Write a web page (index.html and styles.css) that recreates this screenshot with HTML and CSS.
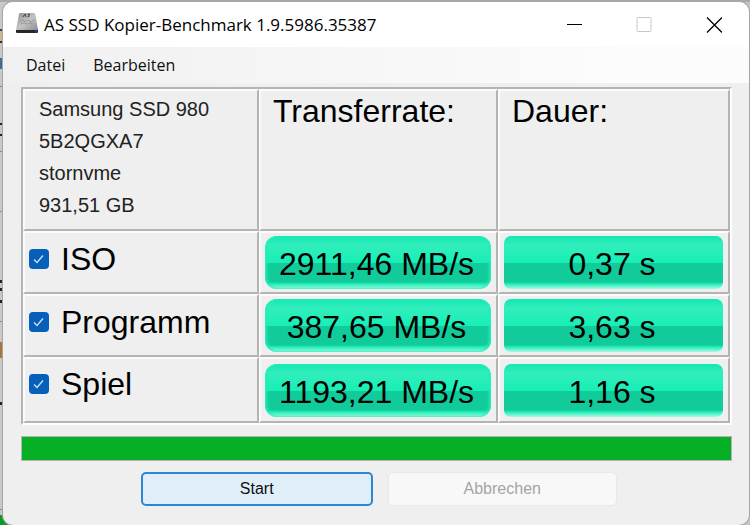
FILE: index.html
```html
<!DOCTYPE html>
<html lang="de">
<head>
    <meta charset="UTF-8">
    <meta name="viewport" content="width=device-width, initial-scale=1.0">
    <title>AS SSD Kopier-Benchmark 1.9.5986.35387</title>
    <link rel="stylesheet" href="styles.css">
</head>
<body>
    <div class="window">

        <header class="titlebar">
            <svg class="app-icon" viewBox="0 0 24 24" aria-hidden="true">
                <defs>
                    <linearGradient id="metal" x1="0" y1="0" x2="1" y2="1">
                        <stop offset="0" stop-color="#909090"/>
                        <stop offset="0.5" stop-color="#c4c4c4"/>
                        <stop offset="1" stop-color="#8c8c8c"/>
                    </linearGradient>
                </defs>
                <path d="M5 0h14q1 0 1.300 1L23 17H1L4 1q.2-1 1-1z" fill="url(#metal)"/>
                <path d="M1 17h22v2q0 1-1 1H2q-1 0-1-1z" fill="#26262e"/>
                <path d="M20 18.500h2" stroke="#2a2aff" stroke-width="2"/>
                <path d="M8 4l2-3 1 3M15 1l-2 .5 1.500 1.500-2 1" fill="none" stroke="#444"/>
                <path d="M5 9l3-2 2 2 3-2 3 2 3-2M6 11l3-1 3 1 3-1 3 1" fill="none" stroke="#999"/>
            </svg>
            <h1>AS SSD Kopier-Benchmark 1.9.5986.35387</h1>
            <div class="window-controls">
                <button type="button" aria-label="Minimieren">
                    <svg viewBox="0 0 16 16"><path d="M1 7.500h15" stroke="#000"/></svg>
                </button>
                <button type="button" aria-label="Maximieren" disabled>
                    <svg viewBox="0 0 16 16"><rect x="1" y="0.500" width="14" height="14" rx="1" fill="none" stroke="#c8c8c8"/></svg>
                </button>
                <button type="button" aria-label="Schließen">
                    <svg viewBox="0 0 16 16"><path d="M1 0.500l15 15M16 0.500L1 15.500" stroke="#000" stroke-width="1.300"/></svg>
                </button>
            </div>
        </header>

        <nav class="menu">
            <button type="button">Datei</button>
            <button type="button">Bearbeiten</button>
        </nav>

        <main class="content">
            <table class="results">
                <thead>
                    <tr>
                        <td class="drive">
                            <p>Samsung SSD 980</p>
                            <p>5B2QGXA7</p>
                            <p>stornvme</p>
                            <p>931,51 GB</p>
                        </td>
                        <th scope="col">Transferrate:</th>
                        <th scope="col">Dauer:</th>
                    </tr>
                </thead>
                <tbody>
                    <tr>
                        <td class="test"><label><input type="checkbox" checked>ISO</label></td>
                        <td><div class="bar">2911,46 MB/s</div></td>
                        <td><div class="bar clipped">0,37 s</div></td>
                    </tr>
                    <tr>
                        <td class="test"><label><input type="checkbox" checked>Programm</label></td>
                        <td><div class="bar">387,65 MB/s</div></td>
                        <td><div class="bar clipped">3,63 s</div></td>
                    </tr>
                    <tr class="last">
                        <td class="test"><label><input type="checkbox" checked>Spiel</label></td>
                        <td><div class="bar">1193,21 MB/s</div></td>
                        <td><div class="bar clipped">1,16 s</div></td>
                    </tr>
                </tbody>
            </table>

            <div class="progress" role="progressbar" aria-label="Fortschritt" aria-valuenow="100">
                <div class="progress-fill" style="width: 100%"></div>
            </div>

            <div class="actions">
                <button type="button" class="start">Start</button>
                <button type="button" disabled>Abbrechen</button>
            </div>
        </main>
    </div>
</body>
</html>
```
FILE: styles.css
```css
* {
    box-sizing: border-box;
}

/* desktop and the edges of the windows lying behind */
body {
    margin: 0;
    padding: 2px 1px 0 3px;
    min-height: 100vh;
    display: flex;
    background:
        linear-gradient(#a8a8a8, #a8a8a8) 0 0 / 100% 2px no-repeat,
        linear-gradient(
            #c8c8c8 29px, #4a4232 29px 31px, #c9b98c 31px 41px, #333 41px 43px,
            #c8c8c8 43px 58px, #3c6c9c 58px 69px, #c8c8c8 69px 86px,
            #8c9440 86px 87px, #c8c8c8 87px 123px, #222 123px 125px,
            #c8c8c8 125px 134px, #222 134px 136px, #c8c8c8 136px 151px,
            #888 151px 152px, #c8c8c8 152px 211px, #888 211px 212px,
            #c8c8c8 212px 280px, #222 280px 283px, #c8c8c8 283px 288px,
            #222 288px 291px, #c8c8c8 291px 300px, #222 300px 303px,
            #c8c8c8 303px 321px, #888 321px 322px, #c8c8c8 322px 342px,
            #a87440 342px 358px, #c8c8c8 358px 402px, #222 402px 405px,
            #c8c8c8 405px 509px, #888 509px 510px, #c8c8c8 510px 515px,
            #0b9a26 515px) 0 0 / 14px 100% no-repeat,
        #c4c4c4;
    font-family: "Liberation Sans", Arial, sans-serif;
    color: #000;
}

button {
    font-family: inherit;
    padding: 0;
}

.window {
    flex: 1;
    background: #efefef;
    border-radius: 10px;
    box-shadow: 0 0 0 1px #a6a6a6;
    overflow: hidden;
}

.titlebar {
    display: flex;
    align-items: center;
    height: 45px;
    padding-left: 12px;
    background: #fff;
}

.app-icon {
    width: 24px;
    height: 24px;
    margin-right: 5px;
}

.titlebar h1 {
    flex: 1;
    margin: 0;
    font: 17px/22px "Open Sans", "Noto Sans", sans-serif;
    white-space: nowrap;
}

.window-controls {
    display: flex;
}

.window-controls button {
    width: 70px;
    height: 45px;
    border: none;
    background: none;
}

.window-controls svg {
    width: 16px;
    height: 16px;
    vertical-align: middle;
}

.menu {
    display: flex;
    gap: 28px;
    height: 36px;
    padding: 0 23px;
    background: linear-gradient(90deg, #f0f0f0, #fcfcfc 85%);
}

.menu button {
    border: none;
    background: none;
    font: 16px "Open Sans", "Noto Sans", sans-serif;
    color: #111;
}

.content {
    padding: 4px 17px 18px 18px;
}

.results {
    width: 100%;
    table-layout: fixed;
    border-collapse: separate;
    border-spacing: 0;
    border: 2px solid;
    border-color: #b4b4b4 #fff #fff #b4b4b4;
    font-size: 32px;
}

.results td, .results th {
    padding: 0 5px 0 4px;
    border: 2px solid;
    border-color: #fbfbfb #b4b4b4 #b4b4b4 #fbfbfb;
    height: 63px;
    text-align: left;
    font-weight: normal;
}

.results thead td, .results thead th {
    height: 142px;
    vertical-align: top;
}

.results thead th {
    padding: 2px 12px;
}

.results .last td {
    height: 66px;
}

.results .drive {
    width: 236px;
    padding: 2px 14px;
    font-size: 20px;
    line-height: 32px;
    color: #222;
}

.drive p {
    margin: 0;
}

.results th:last-child {
    width: 232px;
}

.test label {
    display: flex;
    align-items: center;
    gap: 12px;
    line-height: 36px;
    padding-bottom: 8px;
}

.last .test label {
    padding-bottom: 12px;
}

.test input {
    appearance: none;
    width: 20px;
    height: 20px;
    margin: 0;
    border-radius: 4px;
    background: #0660b9 url("data:image/svg+xml,%3Csvg xmlns='http://www.w3.org/2000/svg' viewBox='0 0 20 20'%3E%3Cpath d='M5 10.500l3 3 6-7' fill='none' stroke='%23cfe2f5' stroke-width='1.300'/%3E%3C/svg%3E");
}

.bar {
    height: 53px;
    padding: 3px 3px 0 0;
    border-radius: 12px;
    background: linear-gradient(#10e8b0 0, #32eebc 9px, #16efb6 27px, #12cb9b 27px, #12cb9b 46px, #20efb8 48px, #b0f7e3 53px);
    box-shadow: inset 2px 0 3px #24efb9, inset -2px 0 3px #24efb9;
    line-height: 50px;
    text-align: center;
    white-space: nowrap;
}

.bar.clipped {
    border-radius: 7px;
    box-shadow: none;
}

.progress {
    height: 25px;
    margin-top: 11px;
    border: 1px solid #b4b4b4;
}

.progress-fill {
    height: 100%;
    background: #06b025;
}

.actions {
    display: flex;
    justify-content: center;
    gap: 15px;
    margin-top: 11px;
    padding: 0 115px 0 120px;
}

.actions button {
    flex: 1 1 0;
    height: 34px;
    border: 1px solid #e8e8e8;
    border-radius: 5px;
    background: #f8f8f8;
    font-size: 16px;
    color: #a5a5a5;
}

.actions .start {
    border: 2px solid #2b86d3;
    background: #e0eef9;
    color: #111;
}
```
